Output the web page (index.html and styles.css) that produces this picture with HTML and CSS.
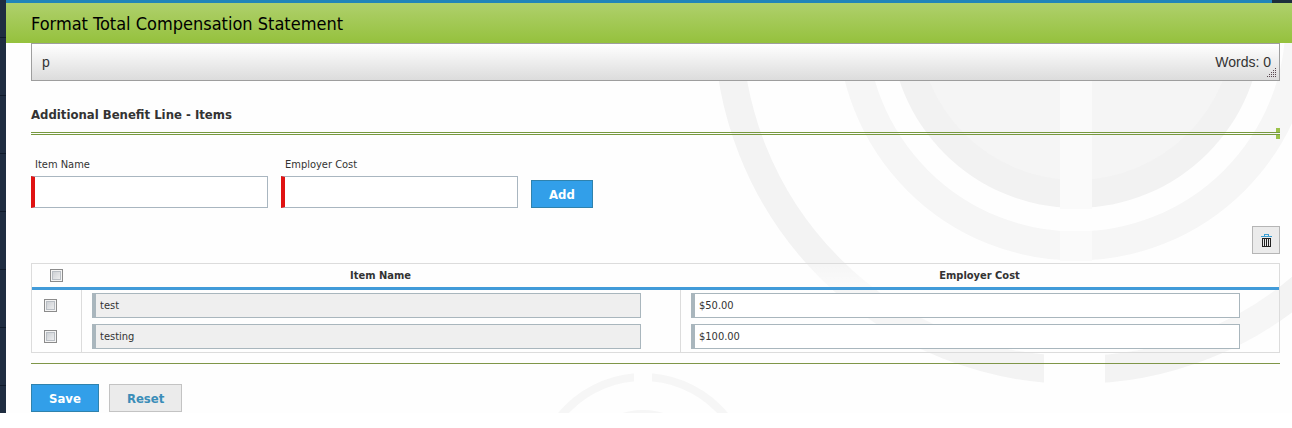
FILE: index.html
```html
<!DOCTYPE html>
<html lang="en">
<head>
    <meta charset="UTF-8">
    <meta name="viewport" content="width=device-width, initial-scale=1.0">
    <title>Format Total Compensation Statement</title>
    <link rel="stylesheet" href="styles.css">
</head>
<body>

<div class="page">
    <div class="sidebar"></div>
    <main class="main">
        <svg class="backdrop" width="780" height="413" viewBox="512 0 780 413" aria-hidden="true">
            <!-- outer ring, open at the bottom -->
            <circle cx="1076" cy="22" r="348" fill="none" stroke="#f3f3f3" stroke-width="28"/>
            <rect x="1044" y="340" width="61" height="60" fill="#fefefe"/>
            <!-- inner rings and disc -->
            <circle cx="1076" cy="22" r="224" fill="none" stroke="#f6f6f6" stroke-width="29"/>
            <circle cx="1076" cy="22" r="186" fill="#f2f2f2"/>
            <circle cx="1076" cy="22" r="158" fill="#f5f5f5"/>
            <rect x="1060" y="0" width="32" height="209" fill="#fafafa"/>
            <rect x="1060" y="231" width="32" height="30" fill="#fafafa"/>
            <!-- small ring -->
            <circle cx="643" cy="483" r="106" fill="none" stroke="#f6f6f6" stroke-width="8"/>
            <circle cx="643" cy="483" r="73" fill="#f6f6f6"/>
            <rect x="634" y="370" width="18" height="14" fill="#fefefe"/>
        </svg>

        <div class="topbar"></div>
        <h1 class="title">Format Total Compensation Statement</h1>

        <div class="content">
            <div class="statusbar">
                <span>p</span>
                <span>Words: 0</span>
                <svg class="grip" width="10" height="10" viewBox="0 0 10 10" aria-hidden="true">
                    <path d="M8 0h1v1h-1zM6 2h1v1h-1zM8 2h1v1h-1zM4 4h1v1h-1zM6 4h1v1h-1zM8 4h1v1h-1zM2 6h1v1h-1zM4 6h1v1h-1zM6 6h1v1h-1zM8 6h1v1h-1zM0 8h1v1h-1zM2 8h1v1h-1zM4 8h1v1h-1zM6 8h1v1h-1zM8 8h1v1h-1z" fill="#5a4750"/>
                </svg>
            </div>

            <h2 class="section-title">Additional Benefit Line - Items</h2>
            <div class="double-line"></div>

            <form class="add-form">
                <div class="field">
                    <label for="itemName">Item Name</label>
                    <input type="text" id="itemName" required>
                </div>
                <div class="field">
                    <label for="employerCost">Employer Cost</label>
                    <input type="text" id="employerCost" required>
                </div>
                <button type="button" class="btn btn-primary">Add</button>
            </form>

            <div class="toolbar">
                <button type="button" class="btn-icon" aria-label="Delete">
                    <svg width="11" height="13" viewBox="0 0 11 13" aria-hidden="true">
                        <path d="M3 0h5v2h3v1h-11v-1h3zM4 1v1h3v-1z" fill="#3d9fd3" fill-rule="evenodd"/>
                        <path d="M1 4h9v9h-9zM2 5v7h1v-7zM4 5v7h1v-7zM6 5v7h1v-7zM8 5v7h1v-7z" fill="#222" fill-rule="evenodd"/>
                    </svg>
                </button>
            </div>

            <table class="items">
                <thead>
                    <tr>
                        <th class="col-check"><input type="checkbox" aria-label="Select all"></th>
                        <th>Item Name</th>
                        <th>Employer Cost</th>
                    </tr>
                </thead>
                <tbody>
                    <tr>
                        <td class="col-check"><input type="checkbox" aria-label="Select test"></td>
                        <td><input type="text" class="cell-input" value="test" aria-label="Item Name" readonly></td>
                        <td><input type="text" class="cell-input" value="$50.00" aria-label="Employer Cost"></td>
                    </tr>
                    <tr>
                        <td class="col-check"><input type="checkbox" aria-label="Select testing"></td>
                        <td><input type="text" class="cell-input" value="testing" aria-label="Item Name" readonly></td>
                        <td><input type="text" class="cell-input" value="$100.00" aria-label="Employer Cost"></td>
                    </tr>
                </tbody>
            </table>

            <div class="actions">
                <button type="button" class="btn btn-primary">Save</button>
                <button type="button" class="btn btn-default">Reset</button>
            </div>
        </div>
    </main>
</div>

</body>
</html>
```
FILE: styles.css
```css
* {
    box-sizing: border-box;
}

body {
    margin: 0;
    background: #fff;
    color: #333;
    font-family: Tahoma, "DejaVu Sans Condensed", "DejaVu Sans", sans-serif;
    font-size: 11px;
}

.page {
    display: flex;
}

.sidebar {
    width: 6px;
    background: repeating-linear-gradient(#1f2d41 0, #1f2d41 37px, #0f1a2a 37px, #0f1a2a 38px, #1f2d41 38px, #1f2d41 58px);
}

.main {
    position: relative;
    flex: 1;
    overflow: hidden;
    background: #fefefe;
}

.backdrop {
    position: absolute;
    top: 0;
    right: 0;
}

.topbar {
    position: relative;
    height: 3px;
    background: #2185b9;
    border-right: 20px solid #1c2e3c;
}

.title {
    position: relative;
    margin: 0;
    padding: 2px 25px 0;
    background: linear-gradient(#afd06c, #95c13d);
    color: #000;
    font-size: 18px;
    font-weight: normal;
    line-height: 38px;
}

.content {
    position: relative;
    padding: 0 12px 1px 25px;
}

.statusbar {
    position: relative;
    display: flex;
    justify-content: space-between;
    align-items: center;
    height: 38px;
    padding: 0 8px 0 10px;
    border: 1px solid #9e9e9e;
    background: linear-gradient(#fff, #dcdcdc);
    font-family: Arial, "Liberation Sans", sans-serif;
    font-size: 14px;
}

.grip {
    position: absolute;
    right: 2px;
    bottom: 2px;
}

.section-title {
    margin: 24px 0 8px;
    font-size: 13px;
    line-height: 19px;
}

.double-line {
    position: relative;
    height: 3px;
    border-top: 1px solid #77993e;
    border-bottom: 1px solid #77993e;
}

/* end caps of the line */
.double-line::before,
.double-line::after {
    content: "";
    position: absolute;
    right: 0;
    width: 4px;
    height: 4px;
    background: #9bc24a;
}

.double-line::before {
    bottom: 2px;
}

.double-line::after {
    top: 2px;
}

.add-form {
    display: flex;
    align-items: flex-end;
    gap: 13px;
    margin-top: 21px;
}

.field {
    display: flex;
    flex-direction: column;
    gap: 2px;
    width: 237px;
}

.field label {
    padding-left: 4px;
    line-height: 18px;
}

.field input {
    height: 32px;
    border: 1px solid #a9b6c0;
    border-left: 4px solid #e01212;
    background: #fff;
}

.btn {
    height: 28px;
    padding: 0 17px;
    border: 1px solid #2f82ad;
    font-family: inherit;
    font-size: 13px;
    font-weight: bold;
}

.btn-primary {
    background: #329fe9;
    color: #fff;
}

.btn-default {
    border-color: #c3c3c3;
    background: #ebebeb;
    color: #3a8db8;
}

.toolbar {
    display: flex;
    justify-content: flex-end;
    margin: 18px 0 9px;
}

.btn-icon {
    display: flex;
    justify-content: center;
    align-items: center;
    width: 28px;
    height: 28px;
    padding: 0;
    border: 1px solid #b5b5b5;
    background: #ebebeb;
}

.items {
    width: 100%;
    table-layout: fixed;
    border: 1px solid #dcdcdc;
    border-spacing: 0;
    background: rgba(255, 255, 255, 0.3);
}

.items th {
    height: 26px;
    padding: 0;
    border-bottom: 3px solid #419bd9;
    font-size: 11px;
    background: linear-gradient(rgba(255, 255, 255, 0), rgba(255, 255, 255, 0.5));
}

.items td {
    height: 31px;
    padding: 3px 10px;
    border-left: 1px solid #dcdcdc;
}

.items .col-check {
    width: 49px;
    border-left: 0;
}

.items td.col-check {
    padding: 0 12px;
}

.items input[type="checkbox"] {
    appearance: none;
    display: block;
    width: 13px;
    height: 13px;
    margin: 0;
    border: 1px solid #8b8b8b;
    background: linear-gradient(135deg, #c4c8cd, #f6f6f6);
    box-shadow: inset 0 0 0 1px #f4f4f4, inset 0 0 0 2px #b9bec4;
}

.items th input[type="checkbox"] {
    margin: 0 auto;
}

.cell-input {
    display: block;
    width: 95%;
    height: 25px;
    padding: 0 4px;
    border: 1px solid #a9b6bd;
    border-left-width: 4px;
    background: #fff;
    color: #333;
    font-family: inherit;
    font-size: 11px;
}

.cell-input:read-only {
    background: #efefef;
}

.actions {
    display: flex;
    gap: 10px;
    margin-top: 10px;
    padding-top: 20px;
    border-top: 1px solid #7f9648;
}
```
